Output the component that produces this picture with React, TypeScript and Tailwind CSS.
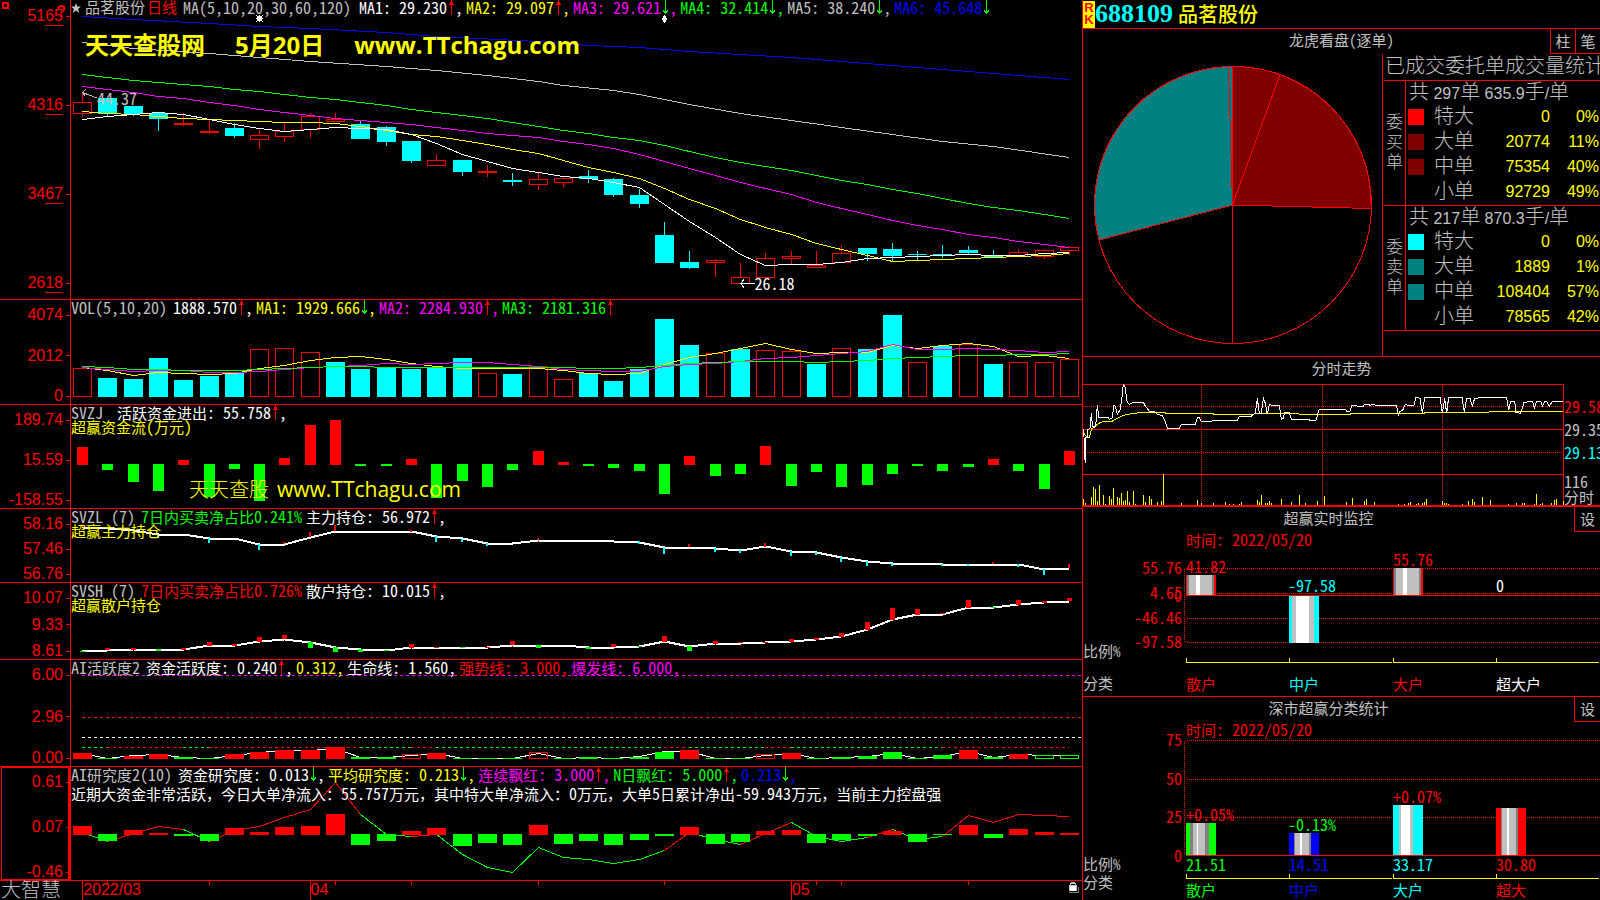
import React from 'react';

const STEP = 987 / 39;
const cx = (i: number) => Math.round(82 + i * STEP);

const RED = '#ff0000';
const CYAN = '#00ffff';
const GREEN = '#00ff00';
const YELLOW = '#ffff00';
const MAGENTA = '#ff00ff';
const BLUE = '#0000ff';
const SILVER = '#c0c0c0';
const GRAY = '#808080';
const WHITE = '#ffffff';

// kind, body top, body bottom, high, low (h = hollow red, r = flat red, c = cyan)
const candles: [string, number, number, number, number][] = [
    ['h', 102, 114, 93, 117], ['c', 98, 114, 98, 116], ['c', 106, 114, 106, 116], ['c', 113, 119, 112, 131],
    ['r', 123, 125, 113, 126], ['r', 131, 133, 119, 134], ['c', 128, 136, 123, 138], ['h', 135, 140, 130, 149],
    ['h', 131, 137, 122, 142], ['h', 116, 130, 113, 138], ['h', 119, 122, 113, 122], ['c', 124, 139, 121, 139],
    ['c', 127, 142, 126, 146], ['c', 141, 161, 141, 163], ['h', 160, 166, 154, 166], ['c', 160, 172, 160, 176],
    ['r', 171, 173, 165, 177], ['c', 180, 182, 173, 186], ['h', 179, 185, 173, 190], ['h', 178, 183, 177, 187],
    ['c', 176, 179, 170, 183], ['c', 179, 195, 178, 197], ['c', 195, 204, 189, 208], ['c', 235, 263, 222, 263],
    ['c', 262, 268, 251, 269], ['h', 260, 263, 259, 277], ['h', 277, 284, 263, 284], ['h', 258, 278, 253, 278],
    ['h', 256, 259, 251, 265], ['h', 265, 268, 251, 268], ['h', 253, 263, 245, 263], ['c', 248, 254, 248, 261],
    ['c', 249, 256, 243, 262], ['c', 254, 255, 251, 260], ['c', 254, 256, 245, 258], ['c', 250, 253, 246, 255],
    ['c', 256, 257, 250, 258], ['h', 252, 257, 249, 257], ['h', 250, 257, 249, 259], ['h', 247, 251, 246, 255],
];

const ma1 = [119, 116, 114, 112, 114, 119, 124, 128, 131, 129, 127, 128, 129, 134, 143, 154, 161, 168, 172, 176, 178, 182, 187, 204, 221, 237, 254, 265, 264, 264, 262, 258, 257, 256, 255, 254, 255, 255, 253, 252];
const ma2 = [111, 113, 114, 116, 118, 119, 120, 121, 122, 122, 123, 126, 130, 134, 136, 140, 144, 149, 153, 160, 167, 172, 178, 188, 199, 208, 219, 227, 234, 243, 249, 255, 261, 260, 259, 258, 257, 256, 255, 253];
const ma3 = [86, 89, 92, 96, 98, 102, 105, 109, 112, 115, 118, 120, 122, 124, 127, 130, 133, 135, 137, 141, 144, 148, 154, 161, 168, 175, 182, 188, 194, 202, 208, 214, 220, 225, 229, 234, 237, 241, 244, 247];
const ma4 = [74, 77, 80, 82, 84, 86, 89, 91, 94, 97, 99, 102, 105, 109, 112, 115, 118, 122, 126, 130, 133, 137, 140, 145, 151, 157, 162, 166, 170, 175, 180, 184, 189, 193, 198, 203, 207, 210, 214, 218];
const ma5: [number, number][] = [[0, 42], [2, 48], [5, 53], [7, 57], [9, 61], [12, 66], [14, 70], [16, 75], [18, 81], [19, 85], [21, 90], [22, 94], [24, 104], [26, 113], [28, 120], [30, 127], [32, 134], [34, 141], [36, 146], [39, 157]];
const ma6: [number, number][] = [[0, 16], [2, 19], [5, 23], [7, 26], [9, 28], [12, 32], [14, 36], [18, 41], [20, 45], [22, 47], [24, 51], [26, 54], [28, 57], [30, 61], [32, 65], [34, 69], [36, 73], [39, 79]];

const volume: [string, number][] = [
    ['h', 368], ['c', 378], ['c', 379], ['c', 358], ['c', 380], ['c', 376], ['c', 373], ['h', 349], ['h', 348], ['h', 352],
    ['c', 362], ['c', 369], ['c', 368], ['c', 369], ['c', 368], ['c', 358], ['h', 373], ['c', 374], ['h', 366], ['h', 379],
    ['c', 373], ['c', 381], ['c', 369], ['c', 319], ['c', 345], ['h', 353], ['c', 349], ['h', 350], ['h', 351], ['c', 364],
    ['h', 348], ['c', 349], ['c', 315], ['h', 362], ['c', 346], ['h', 344], ['c', 364], ['h', 362], ['h', 362], ['h', 359],
];
const volMa1 = [367, 370, 375, 372, 373, 374, 373, 368, 365, 360, 357, 356, 359, 363, 366, 368, 368, 368, 368, 370, 373, 374, 373, 364, 357, 353, 348, 343, 349, 353, 352, 352, 345, 348, 345, 343, 346, 356, 355, 358];
const volMa2 = [367, 369, 371, 370, 370, 372, 372, 371, 369, 367, 366, 365, 363, 364, 363, 362, 362, 364, 366, 369, 370, 371, 371, 366, 364, 363, 361, 358, 357, 355, 353, 351, 344, 349, 349, 348, 349, 350, 352, 351];
const volMa3 = [366, 367, 369, 369, 370, 370, 370, 369, 368, 367, 366, 366, 367, 367, 367, 367, 367, 367, 367, 367, 368, 368, 367, 365, 363, 362, 361, 361, 361, 362, 361, 360, 358, 357, 356, 355, 355, 354, 354, 353];

const flow = [447, 470, 482, 491, 460, 497, 469, 501, 458, 425, 420, 466, 466, 459, 498, 481, 487, 470, 451, 462, 466, 468, 471, 494, 456, 476, 474, 446, 486, 472, 487, 485, 474, 466, 471, 467, 459, 471, 489, 451];

const mainHold = [527, 528, 530, 534, 534, 538, 538, 544, 544, 537, 531, 531, 531, 531, 536, 538, 543, 543, 540, 540, 540, 541, 542, 547, 547, 548, 550, 546, 551, 552, 557, 561, 563, 563, 564, 564, 564, 564, 569, 568];
const mainTicks: [number, string, number, number][] = [
    [0, RED, 524, 527], [3, CYAN, 535, 538], [5, CYAN, 538, 543], [7, CYAN, 544, 550], [8, RED, 542, 544], [9, RED, 532, 537],
    [10, RED, 525, 531], [13, RED, 530, 532], [14, CYAN, 536, 542], [15, CYAN, 539, 542], [16, CYAN, 543, 546], [18, RED, 538, 540],
    [22, CYAN, 541, 544], [23, CYAN, 547, 554], [24, RED, 544, 547], [25, CYAN, 548, 552], [26, CYAN, 550, 553], [27, RED, 543, 547],
    [28, CYAN, 551, 556], [29, CYAN, 552, 555], [30, CYAN, 557, 562], [31, CYAN, 561, 566], [32, CYAN, 563, 566], [34, CYAN, 564, 566],
    [35, CYAN, 564, 566], [36, RED, 562, 564], [37, CYAN, 564, 567], [38, CYAN, 569, 575], [39, RED, 564, 568],
];

const retailHold = [651, 650, 649, 649, 649, 645, 645, 641, 639, 642, 647, 649, 650, 647, 647, 647, 647, 645, 645, 645, 647, 647, 646, 641, 646, 643, 643, 642, 641, 639, 636, 629, 619, 614, 614, 607, 607, 604, 602, 601];
const retailTicks: [number, string, number, number][] = [
    [0, GREEN, 651, 652], [1, RED, 648, 650], [2, RED, 648, 650], [3, GREEN, 649, 651], [4, RED, 648, 650], [5, RED, 642, 646],
    [6, RED, 644, 646], [7, RED, 637, 642], [8, RED, 635, 639], [9, GREEN, 642, 648], [10, GREEN, 647, 652], [11, GREEN, 649, 652],
    [12, GREEN, 650, 651], [13, RED, 644, 648], [14, RED, 647, 648], [15, GREEN, 647, 648], [16, RED, 647, 648], [17, RED, 641, 645],
    [18, GREEN, 645, 648], [20, GREEN, 647, 649], [21, RED, 644, 647], [22, GREEN, 646, 647], [23, RED, 636, 642], [24, GREEN, 646, 651],
    [25, RED, 641, 644], [26, RED, 642, 643], [27, RED, 642, 643], [28, RED, 639, 642], [29, RED, 638, 640], [30, RED, 633, 637],
    [31, RED, 622, 630], [32, RED, 608, 620], [33, RED, 609, 615], [34, RED, 613, 614], [35, RED, 600, 608], [36, GREEN, 607, 608],
    [37, RED, 600, 605], [38, RED, 601, 603], [39, RED, 598, 601],
];

// r / g = solid, R / G = outlined
const activeKinds = 'rgrrggrrrrrggRrgggRgggggrggRrggggggrgrGG';
const activeTop = [753, 758, 756, 754, 757, 758, 754, 752, 750, 750, 747, 757, 757, 754, 753, 758, 758, 758, 752, 758, 757, 758, 757, 752, 750, 758, 758, 754, 753, 758, 757, 756, 752, 758, 755, 750, 757, 754, 755, 755];
const activeLine = [753, 758, 755, 754, 757, 758, 755, 752, 750, 750, 748, 757, 757, 755, 753, 758, 758, 758, 753, 758, 757, 758, 756, 751, 751, 758, 758, 755, 753, 758, 757, 756, 753, 758, 756, 751, 757, 754, 755, 755];
const trendSegments: [number, number, string][] = [
    [0, 1, GREEN], [1, 4, RED], [4, 5, GREEN], [5, 11, RED], [11, 13, GREEN], [13, 14, RED], [14, 23, GREEN],
    [23, 24, RED], [24, 27, GREEN], [27, 28, RED], [28, 34, GREEN], [34, 39, RED],
];

const research = [826, 841, 830, 833, 836, 841, 828, 832, 827, 826, 814, 845, 841, 831, 828, 846, 843, 845, 825, 844, 841, 845, 840, 836, 827, 844, 842, 831, 830, 843, 840, 836, 831, 842, 835, 825, 838, 829, 832, 833];
const researchLine = [832, 841, 833, 826, 829, 841, 830, 826, 817, 809, 782, 814, 834, 836, 834, 854, 867, 872, 847, 857, 859, 863, 859, 850, 832, 839, 844, 833, 822, 836, 841, 837, 829, 839, 836, 815, 822, 814, 815, 816];
const researchSegments: [number, number, string][] = [
    [0, 1, GREEN], [1, 4, RED], [4, 5, GREEN], [5, 11, RED], [11, 13, GREEN], [13, 14, RED], [14, 23, GREEN],
    [23, 24, RED], [24, 26, GREEN], [26, 28, RED], [28, 31, GREEN], [31, 32, RED], [32, 34, GREEN], [34, 39, RED],
];

const priceLine = '9,238 12,262 13,310 16,338 18,262 22,262 24,238 30,235 34,190 37,225 40,232 47,230 52,166 56,201 84,201 88,208 96,205 102,166 106,168 112,192 120,180 125,150 130,103 135,112 142,158 148,163 160,157 190,157 196,168 208,184 222,184 232,193 246,196 256,214 262,235 298,235 304,223 346,223 352,203 358,203 364,214 396,214 398,211 472,211 478,199 514,199 520,193 526,190 532,145 538,190 544,190 550,145 556,160 562,193 568,163 574,166 598,166 604,208 610,205 614,187 628,187 634,208 686,208 690,211 708,211 714,190 718,178 796,178 800,184 810,184 816,166 828,166 832,169 850,169 853,163 866,163 870,166 880,163 886,166 950,166 955,199 960,184 968,181 974,166 978,163 984,166 1002,166 1008,142 1020,145 1027,190 1034,142 1080,142 1087,190 1094,145 1100,190 1106,142 1146,142 1153,187 1160,145 1170,145 1177,168 1184,145 1214,142 1280,142 1286,181 1292,154 1304,154 1308,187 1322,190 1332,157 1358,154 1363,175 1370,154 1382,154 1387,168 1394,154 1400,154 1408,168 1418,154 1448,154';
const averageLine = '9,238 12,250 20,262 28,262 34,238 45,228 60,218 70,214 96,214 110,206 130,196 160,190 190,187 250,187 260,190 400,190 402,193 520,193 530,190 655,190 658,193 810,193 815,190 1032,190 1036,187 1225,187 1230,184 1448,184';
const minuteVolume: [number, number][] = [
    [10, 447], [16, 459], [34, 441], [40, 411], [46, 417], [52, 453], [58, 405], [70, 435], [76, 462], [88, 438], [94, 447],
    [100, 414], [112, 441], [118, 444], [124, 429], [130, 453], [136, 450], [142, 423], [148, 456], [160, 423], [166, 462],
    [190, 435], [196, 456], [208, 438], [214, 447], [232, 456], [244, 453], [250, 373], [304, 459], [352, 450], [364, 459],
    [400, 459], [436, 456], [448, 462], [460, 462], [478, 462], [484, 456], [532, 450], [538, 456], [544, 435], [556, 459],
    [562, 459], [568, 453], [574, 459], [604, 447], [634, 456], [658, 435], [676, 459], [712, 453], [733, 438], [799, 456],
    [817, 444], [853, 453], [859, 447], [883, 456], [955, 462], [973, 462], [985, 459], [991, 456], [1009, 462], [1015, 459],
    [1027, 459], [1033, 456], [1039, 447], [1087, 453], [1093, 459], [1099, 459], [1105, 462], [1147, 462], [1165, 453],
    [1177, 447], [1183, 456], [1207, 441], [1231, 450], [1285, 462], [1309, 459], [1327, 459], [1333, 459], [1363, 462],
    [1369, 432], [1381, 462], [1387, 459], [1415, 459], [1423, 450], [1429, 447], [1450, 453],
];

const series = (ys: number[], from = 0, to = ys.length - 1) =>
    ys.slice(from, to + 1).map((y, k) => `${cx(from + k) + 0.5},${y + 0.5}`).join(' ');
const sparse = (pts: [number, number][]) => pts.map(([i, y]) => `${cx(i) + 0.5},${y + 0.5}`).join(' ');

// Chinese runs are set one pixel smaller than the half-width Latin around them
const Mixed = ({ text }: { text: string }) => (
    <>
        {text.split(/([\u4e00-\u9fff\uff00-\uffef]+)/).map((part, i) =>
            i % 2 ? <span key={i} className="text-[15px] [font-feature-settings:normal]">{part}</span> : part
        )}
    </>
);

const Arrow = ({ up }: { up: boolean }) => (
    <svg viewBox="0 0 8 15" className="h-[15px] w-2 shrink-0" shapeRendering="crispEdges">
        {up ? (
            <path d="M4 0h1v15h-1z M3 2h3v1h-3z M2 4h2v1h-2z M5 4h2v1h-2z M3 3h3v1h-3z" fill={RED} />
        ) : (
            <path d="M4 0h1v14h-1z M3 12h3v1h-3z M2 10h1v2h-1z M6 10h1v2h-1z M3 11h3v1h-3z" fill={GREEN} />
        )}
    </svg>
);

interface ReadingProps {
    text: string;
    color: string;
    dir?: 'up' | 'down';
    end?: string;
}

const Reading = ({ text, color, dir, end = ',' }: ReadingProps) => (
    <span className={`mr-[3px] flex ${color}`}>
        <span><Mixed text={text} /></span>
        {dir && <Arrow up={dir === 'up'} />}
        <span>{end}</span>
    </span>
);

interface PanelProps {
    labels: string[];
    top: number;
    height: number;
    chart: React.ReactNode;
    children: React.ReactNode;
    underline?: boolean;
    active?: boolean;
    corner?: React.ReactNode;
}

const Panel = ({ labels, top, height, chart, children, underline, active, corner }: PanelProps) => (
    <section className="flex min-h-0 border-b border-[#ff0000]">
        <div className={`relative flex w-[71px] shrink-0 flex-col justify-between border-r border-[#ff0000] font-['Liberation_Sans',sans-serif] text-base leading-4 text-[#ff0000] ${underline ? 'py-2' : 'pt-[7px]'}`}>
            {active && <div className="absolute inset-y-0 right-0 left-px border border-r-2 border-[#ff0000]" />}
            {corner}
            {labels.map((label) => (
                <div key={label} className="relative flex items-center justify-end gap-[3px]">
                    <span>{underline ? <>{label.slice(0, 2)}<span className="underline decoration-1 underline-offset-4">{label.slice(2)}</span></> : label}</span>
                    <span className="h-px w-1 bg-[#ff0000]" />
                </div>
            ))}
        </div>
        <div className="relative min-w-0 flex-1">
            <svg
                viewBox={`71 ${top} 1011 ${height}`}
                preserveAspectRatio="none"
                shapeRendering="crispEdges"
                className="absolute inset-0 h-full w-full"
                fill="none"
            >
                {chart}
            </svg>
            <div className="relative whitespace-pre leading-[14px]">{children}</div>
        </div>
    </section>
);

const KLineChart = () => (
    <>
        {candles.map(([kind, top, bottom, high, low], i) => {
            const color = kind === 'c' ? CYAN : RED;
            return (
                <g key={i}>
                    {high < top && <rect x={cx(i)} y={high} width="1" height={top - high} fill={color} />}
                    {low > bottom && <rect x={cx(i)} y={bottom} width="1" height={low - bottom} fill={color} />}
                    {kind === 'h' ? (
                        <rect x={cx(i) - 8.5} y={top + 0.5} width="18" height={bottom - top - 1} stroke={RED} />
                    ) : (
                        <rect x={cx(i) - 9} y={top} width="19" height={bottom - top} fill={color} />
                    )}
                </g>
            );
        })}
        <polyline points={sparse(ma6)} stroke={BLUE} />
        <polyline points={sparse(ma5)} stroke={SILVER} />
        <polyline points={series(ma4)} stroke={GREEN} />
        <polyline points={series(ma3)} stroke={MAGENTA} />
        <polyline points={series(ma2)} stroke={YELLOW} />
        <polyline points={series(ma1)} stroke={WHITE} />
        <path d="M82.5 92.5L97 98M85.5 89.5L82.5 92.5L85.5 96.5" stroke={SILVER} />
        <path d="M740 283.5H755M744 279.5L740.5 283.5L744 287.5" stroke={WHITE} />
        <path d="M257 16h5v5h-5zM256 15h1v1h-1zM262 15h1v1h-1zM256 21h1v1h-1zM262 21h1v1h-1zM259 15h1v7h-1zM256 18h7v1h-7z" fill={WHITE} />
        <path d="M664 15h1v1h1v2h1v2h-1v2h-1v1h-1v-1h-1v-2h-1v-2h1v-2h1z" fill={WHITE} />
    </>
);

const VolumeChart = () => (
    <>
        {volume.map(([kind, top], i) =>
            kind === 'h' ? (
                <rect key={i} x={cx(i) - 8.5} y={top + 0.5} width="18" height={396 - top} stroke={RED} />
            ) : (
                <rect key={i} x={cx(i) - 9} y={top} width="19" height={397 - top} fill={CYAN} />
            )
        )}
        <polyline points={series(volMa1)} stroke={YELLOW} />
        <polyline points={series(volMa2)} stroke={MAGENTA} />
        <polyline points={series(volMa3)} stroke={GREEN} />
    </>
);

const FlowChart = () => (
    <>
        {flow.map((y, i) =>
            y < 465 ? (
                <rect key={i} x={cx(i) - 5} y={y} width="11" height={465 - y} fill={RED} />
            ) : (
                <rect key={i} x={cx(i) - 5} y="464" width="11" height={y - 464} fill={GREEN} />
            )
        )}
    </>
);

const HoldChart = ({ line, ticks, width }: { line: number[]; ticks: [number, string, number, number][]; width: number }) => (
    <>
        <polyline points={series(line)} stroke={WHITE} strokeWidth="2" />
        {ticks.map(([i, color, y1, y2]) => (
            <rect key={i} x={cx(i) - Math.floor(width / 2)} y={y1} width={width} height={y2 - y1} fill={color} />
        ))}
    </>
);

const ActiveChart = () => (
    <>
        <path d="M82 675.5H1082" stroke={MAGENTA} strokeDasharray="3 3" />
        <path d="M82 717.5H1082" stroke={RED} strokeDasharray="3 3" />
        <path d="M82 737.5H1082" stroke={WHITE} strokeDasharray="3 3" />
        {trendSegments.map(([a, b, color]) => (
            <path key={a} d={`M${cx(a)} 747.5H${cx(b)}`} stroke={color} strokeDasharray="3 3" />
        ))}
        <polyline points={series(activeLine)} stroke={WHITE} />
        {activeTop.map((top, i) => {
            const kind = activeKinds[i];
            const color = kind.toLowerCase() === 'r' ? RED : GREEN;
            return kind === 'R' || kind === 'G' ? (
                <rect key={i} x={cx(i) - 8.5} y={top + 0.5} width="18" height={758 - top} stroke={color} />
            ) : (
                <rect key={i} x={cx(i) - 9} y={top} width="19" height={759 - top} fill={color} />
            );
        })}
    </>
);

const ResearchChart = () => (
    <>
        {researchSegments.map(([a, b, color]) => (
            <polyline key={a} points={series(researchLine, a, b)} stroke={color} />
        ))}
        {research.map((y, i) =>
            y < 834 ? (
                <rect key={i} x={cx(i) - 9} y={y} width="19" height={835 - y} fill={RED} />
            ) : (
                <rect key={i} x={cx(i) - 9} y="834" width="19" height={Math.max(1, y - 834)} fill={GREEN} />
            )
        )}
    </>
);

const TimeAxis = () => (
    <footer className="flex min-h-0">
        <div className="w-[71px] shrink-0 pl-px text-xl leading-4 font-light text-[#c0c0c0]">大智慧</div>
        <div className="relative flex-1 font-['Liberation_Sans',sans-serif] text-base leading-[18px] text-[#ff0000]">
            <svg viewBox="71 881 1011 19" preserveAspectRatio="none" className="absolute inset-0 h-full w-full" shapeRendering="crispEdges">
                {[82, 310, 791].map((x) => <rect key={x} x={x} y="881" width="1" height="19" fill={RED} />)}
                {[107, 209, 335, 411, 538, 664, 816, 841, 968].map((x) => <rect key={x} x={x} y="881" width="1" height="4" fill={RED} />)}
                <path d="M1071 882h4v1h1v2h-1v-1h-4v1h-1v-2h1z" fill={SILVER} />
                <path d="M1069 885h8v1h-8zM1069 886h1v5h-1zM1076 886h1v5h-1z" fill={SILVER} />
                <path d="M1070 886h6v5h-6z" fill={WHITE} />
                <path d="M1078 887h1v6h-10v-1h9z" fill={GRAY} />
            </svg>
            <span className="absolute left-[1.2%]">2022/03</span>
            <span className="absolute left-[23.7%]">04</span>
            <span className="absolute left-[71.3%]">05</span>
        </div>
    </footer>
);

const pieX = 149.5;
const pieY = 151;

const PieChart = () => (
    <svg viewBox="0 0 299 302" className="w-[299px] shrink-0" shapeRendering="crispEdges" fill="none" stroke={RED}>
        <path d={`M${pieX} ${pieY}V12.5A138.5 138.5 0 0 1 197 20.5Z`} fill="#800000" />
        <path d={`M${pieX} ${pieY}L197 20.5A138.5 138.5 0 0 1 288 154.5Z`} fill="#800000" />
        <path d={`M${pieX} ${pieY}L16 186A138.5 138.5 0 0 1 145.5 12.5Z`} fill="#008080" />
        <path d={`M${pieX} ${pieY}L145.5 12.5H${pieX}Z`} fill="#008080" />
        <circle cx="150" cy={pieY} r="138.5" />
        <path d={`M${pieX} ${pieY}V289`} />
    </svg>
);

interface OrderGroup {
    side: string;
    count: string;
    average: string;
    rows: [string, string, string, string][];
}

const orders: OrderGroup[] = [
    {
        side: '委买单',
        count: '297',
        average: '635.9',
        rows: [
            ['bg-[#ff0000]', '特大', '0', '0%'],
            ['bg-[#800000]', '大单', '20774', '11%'],
            ['bg-[#800000]', '中单', '75354', '40%'],
            ['bg-black', '小单', '92729', '49%'],
        ],
    },
    {
        side: '委卖单',
        count: '217',
        average: '870.3',
        rows: [
            ['bg-[#00ffff]', '特大', '0', '0%'],
            ['bg-[#008080]', '大单', '1889', '1%'],
            ['bg-[#008080]', '中单', '108404', '57%'],
            ['bg-black', '小单', '78565', '42%'],
        ],
    },
];

const OrderStats = () => (
    <div className="min-w-0 flex-1 overflow-hidden border-l border-[#ff0000] pl-px font-['Liberation_Sans','Noto_Sans_CJK_SC',sans-serif] font-light">
        <h3 className="h-[26px] whitespace-nowrap pl-px text-xl leading-6 text-[#c0c0c0]">已成交委托单成交量统计</h3>
        {orders.map(({ side, count, average, rows }) => (
            <div key={side} className="flex h-[125px] border-t border-[#ff0000]">
                <div className="flex w-[22px] shrink-0 flex-col items-center justify-center border-r border-[#ff0000] text-[17px] leading-5 text-[#c0c0c0]">
                    {side.split('').map((c) => <span key={c}>{c}</span>)}
                </div>
                <div className="min-w-0 flex-1">
                    <div className="h-[23px] whitespace-nowrap pl-[3px] text-base leading-[22px] font-normal text-[#c0c0c0]">
                        <span className="text-xl leading-[22px] font-light">共</span> {count}<span className="text-xl leading-[22px] font-light">单</span> {average}<span className="text-xl leading-[22px] font-light">手</span>/<span className="text-xl leading-[22px] font-light">单</span>
                    </div>
                    <table className="w-full table-fixed text-base text-[#ffff00]">
                        <tbody>
                            {rows.map(([swatch, name, amount, share]) => (
                                <tr key={name} className="h-[25px]">
                                    <td className="w-7 p-0 pl-0.5"><div className={`size-4 ${swatch}`} /></td>
                                    <th className="w-12 p-0 text-left text-xl leading-[25px] font-light text-[#c0c0c0]">{name}</th>
                                    <td className="p-0 text-right font-normal">{amount}</td>
                                    <td className="w-[50px] p-0 pr-px text-right font-normal">{share}</td>
                                </tr>
                            ))}
                        </tbody>
                    </table>
                </div>
            </div>
        ))}
        <div className="border-t border-[#ff0000]" />
    </div>
);

const Intraday = () => (
    <section className="border-b-2 border-[#ff0000]">
        <h2 className="h-[27px] text-center text-[15px] leading-[22px] text-[#c0c0c0]">分时走势</h2>
        <div className="flex">
            <svg viewBox="9 102 1443 363" className="h-[121px] w-[481px] shrink-0" shapeRendering="crispEdges" fill="none">
                <g stroke={RED} strokeWidth="3">
                    <path d="M9 103.5H1452M9 238.5H1452M9 373.5H1452M1450.5 102V465" />
                    <path d="M9 169.5H1450M9 307.5H1450M364.5 105V465M727.5 105V465M1087.5 105V465" strokeDasharray="3 3" />
                </g>
                {minuteVolume.map(([x, y]) => (
                    <path key={x} d={`M${x + 0.5} ${y}V465`} stroke={YELLOW} strokeWidth="3" />
                ))}
                <polyline points={averageLine} stroke={YELLOW} strokeWidth="3" />
                <polyline points={priceLine} stroke={WHITE} strokeWidth="3" />
            </svg>
            <div className="flex min-w-0 flex-1 flex-col overflow-hidden pt-[11px] text-base leading-[23px] text-[#c0c0c0]">
                <span className="text-[#ff0000]">29.58</span>
                <span>29.35</span>
                <span className="text-[#00ffff]">29.13</span>
                <span className="mt-2.5 leading-[15px]">116</span>
                <span className="text-[15px] leading-[15px]">分时</span>
            </div>
        </div>
    </section>
);

type Stripe = [string, number];
interface Bar {
    x: number;
    y: number;
    h: number;
    stripes: Stripe[];
}

const Bars = ({ bars }: { bars: Bar[] }) => (
    <>
        {bars.map(({ x, y, h, stripes }) => {
            let left = x;
            return stripes.map(([color, w], i) => {
                const at = left;
                left += w;
                return <rect key={`${x}-${i}`} x={at} y={y} width={w} height={h} fill={color} />;
            });
        })}
    </>
);

const redBar: Stripe[] = [[RED, 1], [GRAY, 2], [SILVER, 7], [WHITE, 4], [SILVER, 12], [GRAY, 2], [RED, 2]];
const monitorBars: Bar[] = [
    { x: 1186, y: 575, h: 20, stripes: redBar },
    { x: 1289, y: 596, h: 47, stripes: [[CYAN, 3], [SILVER, 4], [WHITE, 13], [SILVER, 5], [CYAN, 5]] },
    { x: 1393, y: 568, h: 27, stripes: redBar },
];
const classBars: Bar[] = [
    { x: 1186, y: 823, h: 32, stripes: [[GREEN, 4], [GRAY, 3], [SILVER, 4], [WHITE, 1], [SILVER, 7], [GRAY, 4], [GREEN, 7]] },
    { x: 1289, y: 833, h: 22, stripes: [[BLUE, 5], [GRAY, 1], [SILVER, 5], [WHITE, 2], [SILVER, 7], [GRAY, 2], [BLUE, 8]] },
    { x: 1393, y: 805, h: 50, stripes: [[CYAN, 6], [SILVER, 2], [WHITE, 9], [SILVER, 3], [CYAN, 10]] },
    { x: 1496, y: 808, h: 47, stripes: [[RED, 5], [GRAY, 1], [SILVER, 5], [WHITE, 2], [SILVER, 7], [GRAY, 2], [RED, 8]] },
];

// text, x, centre y, colour, anchor
type Label = [string, number, number, string, ('end' | 'start')?];

const Labels = ({ items }: { items: Label[] }) => (
    <>
        {items.map(([text, x, y, color, anchor = 'start']) => (
            <text key={`${text}${x}${y}`} x={x} y={y + 5} fill={color} textAnchor={anchor} className={/[\u4e00-\u9fff]/.test(text) ? 'text-[15px]' : 'text-base'}>
                {text}
            </text>
        ))}
    </>
);

const monitorLabels: Label[] = [
    ['55.76', 1182, 569, RED, 'end'], ['4.65', 1182, 594, RED, 'end'], ['0', 1182, 597, RED, 'end'],
    ['-46.46', 1182, 619, RED, 'end'], ['-97.58', 1182, 643, RED, 'end'],
    ['41.82', 1186, 568, RED], ['-97.58', 1288, 587, CYAN], ['55.76', 1393, 561, RED], ['0', 1496, 587, WHITE],
    ['比例%', 1083, 652, SILVER], ['分类', 1083, 684, SILVER],
    ['散户', 1186, 685, RED], ['中户', 1289, 685, CYAN], ['大户', 1393, 685, RED], ['超大户', 1496, 685, WHITE],
];
const classLabels: Label[] = [
    ['75', 1182, 741, RED, 'end'], ['50', 1182, 780, RED, 'end'], ['25', 1182, 818, RED, 'end'], ['0', 1182, 857, RED, 'end'],
    ['+0.05%', 1186, 816, RED], ['-0.13%', 1288, 826, GREEN], ['+0.07%', 1393, 798, RED],
    ['21.51', 1186, 866, GREEN], ['14.51', 1289, 866, BLUE], ['33.17', 1393, 866, CYAN], ['30.80', 1496, 866, RED],
    ['比例%', 1083, 865, SILVER], ['分类', 1083, 883, SILVER],
    ['散户', 1186, 891, GREEN], ['中户', 1289, 891, BLUE], ['大户', 1393, 891, CYAN], ['超大', 1496, 891, RED],
];

const SettingTitle = ({ title }: { title: string }) => (
    <div className="flex h-[25px] text-[15px] leading-[22px] text-[#c0c0c0]">
        <h2 className="flex-1 text-center">{title}</h2>
        <button className="h-[25px] w-[26px] border-b border-l border-[#ff0000]">设</button>
    </div>
);

const Category = ({ y }: { y: number }) => (
    <path
        d={`M1186.5 ${y - 4}V${y + 0.5}H1392M1289.5 ${y - 4}V${y}M1393.5 ${y - 4}V${y + 0.5}H1599M1496.5 ${y - 4}V${y}`}
        stroke={YELLOW}
        fill="none"
    />
);

const Sidebar = () => (
    <aside className="w-[518px] shrink-0 overflow-hidden border-l border-[#ff0000]">
        <header className="flex h-[29px] items-center border-b border-[#ff0000]">
            <div className="flex h-[27px] w-3 flex-col items-center justify-center bg-[#ffff00] font-['Liberation_Sans',sans-serif] text-[13px] leading-3 font-bold text-[#ff0000]">
                <span>R</span>
                <span>K</span>
            </div>
            <h1 className="flex items-center gap-[5px] leading-7">
                <span className="font-['Liberation_Serif',serif] text-[26px] font-bold text-[#00ffff]">688109</span>
                <span className="text-xl font-medium text-[#ffff00]">品茗股份</span>
            </h1>
        </header>
        <section className="border-b border-[#ff0000]">
            <div className="flex h-[25px] text-[15px] leading-[22px] text-[#c0c0c0]">
                <h2 className="flex-1 pl-[50px] text-center">龙虎看盘(逐单)</h2>
                <button className="h-[25px] w-[25px] border-b border-l border-[#ff0000]">柱</button>
                <button className="h-[25px] w-[25px] border-b border-l border-[#ff0000]">笔</button>
            </div>
            <div className="flex h-[302px]">
                <PieChart />
                <OrderStats />
            </div>
        </section>
        <Intraday />
        <section className="border-b border-[#ff0000]">
            <SettingTitle title="超赢实时监控" />
            <p className="h-4 pl-[103px] text-base leading-[14px] text-[#ff0000]"><Mixed text="时间: 2022/05/20" /></p>
            <svg viewBox="1083 548 517 148" className="block w-full">
                <g shapeRendering="crispEdges">
                    <path d="M1187 568.5H1600M1187 593.5H1600M1187 618.5H1600M1187 642.5H1600M1184.5 569V643" stroke={RED} strokeDasharray="1 1" />
                    <path d="M1186 595.5H1600" stroke={RED} />
                    <Bars bars={monitorBars} />
                    <Category y={662} />
                </g>
                <Labels items={monitorLabels} />
            </svg>
        </section>
        <section>
            <SettingTitle title="深市超赢分类统计" />
            <p className="h-4 pl-[103px] text-base leading-[14px] text-[#ff0000]"><Mixed text="时间: 2022/05/20" /></p>
            <svg viewBox="1083 738 517 162" className="block w-full overflow-visible">
                <g shapeRendering="crispEdges">
                    <path d="M1187 740.5H1600M1187 779.5H1600M1187 817.5H1600M1184.5 741V855" stroke={RED} strokeDasharray="1 1" />
                    <path d="M1186 855.5H1600" stroke={RED} />
                    <Bars bars={classBars} />
                    <Category y={878} />
                </g>
                <Labels items={classLabels} />
            </svg>
        </section>
    </aside>
);

export default function App() {
    return (
        <div className="flex h-screen overflow-hidden bg-black font-['Noto_Sans_CJK_SC',sans-serif] text-base font-normal text-white [font-feature-settings:'hwid']">
            <main className="grid min-w-0 flex-1 grid-rows-[300fr_105fr_104fr_74fr_77fr_107fr_114fr_19fr]">
                <Panel
                    labels={['5165', '4316', '3467', '2618']}
                    top={0}
                    height={299}
                    underline
                    chart={<KLineChart />}
                    corner={
                        <>
                            <svg viewBox="0 0 8 8" className="absolute top-0.5 left-0.5 size-2" shapeRendering="crispEdges">
                                <path d="M0 0h7v7h-7zM2 2v3h3v-3zM7 7h1v1h-1z" fill={RED} fillRule="evenodd" />
                            </svg>
                            <span className="absolute top-0 right-1 text-base font-bold">?</span>
                        </>
                    }
                >
                    <div className="flex">
                        <span className="flex w-[14px] items-center">
                            <svg viewBox="0 0 10 10" className="size-[10px]" fill={SILVER}>
                                <path d="M5 0L6.3 3.6H10L7.1 6L8.2 10L5 7.6L1.8 10L2.9 6L0 3.6H3.7Z" />
                            </svg>
                        </span>
                        <span className="text-[15px] text-[#c0c0c0]">品茗股份</span>
                        <span className="mr-1.5 ml-0.5 text-[15px] text-[#ff0000]">日线</span>
                        <span className="mr-2 text-[#c0c0c0]">MA(5,10,20,30,60,120)</span>
                        <Reading text="MA1: 29.230" color="text-white" dir="up" />
                        <Reading text="MA2: 29.097" color="text-[#ffff00]" dir="up" />
                        <Reading text="MA3: 29.621" color="text-[#ff00ff]" dir="down" />
                        <Reading text="MA4: 32.414" color="text-[#00ff00]" dir="down" />
                        <Reading text="MA5: 38.240" color="text-[#c0c0c0]" dir="down" />
                        <Reading text="MA6: 45.648" color="text-[#0000ff]" dir="down" end="" />
                    </div>
                    <div className="flex gap-[30px] pt-[18px] pl-[14px] font-['Open_Sans','Noto_Sans_CJK_SC',sans-serif] text-2xl leading-6 font-bold text-[#ffff00] [font-feature-settings:normal]">
                        <span>天天查股网</span>
                        <span>5月20日</span>
                        <span>www.TTchagu.com</span>
                    </div>
                    <span className="absolute top-[91px] left-[26px] text-[#c0c0c0]">44.37</span>
                    <span className="absolute top-[276px] left-[67.6%]">26.18</span>
                </Panel>
                <Panel labels={['4074', '2012', '0']} top={300} height={104} chart={<VolumeChart />}>
                    <div className="flex">
                        <span className="mr-[6px] text-[#c0c0c0]">VOL(5,10,20)</span>
                        <Reading text="1888.570" color="text-white" dir="up" />
                        <Reading text="MA1: 1929.666" color="text-[#ffff00]" dir="down" />
                        <Reading text="MA2: 2284.930" color="text-[#ff00ff]" dir="up" />
                        <Reading text="MA3: 2181.316" color="text-[#00ff00]" dir="up" end="" />
                    </div>
                </Panel>
                <Panel labels={['189.74', '15.59', '-158.55']} top={405} height={103} chart={<FlowChart />}>
                    <div className="flex h-[14px]">
                        <span className="mr-[14px] text-[#c0c0c0]">SVZJ</span>
                        <Reading text="活跃资金进出: 55.758" color="text-white" dir="up" />
                    </div>
                    <div className="text-[#ffff00]"><Mixed text="超赢资金流(万元)" /></div>
                    <div className="flex gap-2 pt-[43px] pl-[118px] text-xl leading-6 text-[#ffff00]">
                        <span className="font-light">天天查股</span>
                        <span className="font-['Open_Sans','Noto_Sans',sans-serif] text-[21px]">www.TTchagu.com</span>
                    </div>
                </Panel>
                <Panel labels={['58.16', '57.46', '56.76']} top={509} height={73} chart={<HoldChart line={mainHold} ticks={mainTicks} width={2} />}>
                    <div className="flex h-[14px]">
                        <span className="mr-[6px] text-[#c0c0c0]">SVZL (7)</span>
                        <span className="mr-1 text-[#00ff00]"><Mixed text="7日内买卖净占比0.241%" /></span>
                        <Reading text="主力持仓: 56.972" color="text-white" dir="up" />
                    </div>
                    <div className="text-[#ffff00]"><Mixed text="超赢主力持仓" /></div>
                </Panel>
                <Panel labels={['10.07', '9.33', '8.61']} top={583} height={76} chart={<HoldChart line={retailHold} ticks={retailTicks} width={5} />}>
                    <div className="flex h-[14px]">
                        <span className="mr-[6px] text-[#c0c0c0]">SVSH (7)</span>
                        <span className="mr-1 text-[#ff0000]"><Mixed text="7日内买卖净占比0.726%" /></span>
                        <Reading text="散户持仓: 10.015" color="text-white" dir="up" />
                    </div>
                    <div className="text-[#ffff00]"><Mixed text="超赢散户持仓" /></div>
                </Panel>
                <Panel labels={['6.00', '2.96', '0.00']} top={660} height={106} chart={<ActiveChart />}>
                    <div className="flex">
                        <span className="mr-[6px] text-[#c0c0c0]"><Mixed text="AI活跃度2" /></span>
                        <Reading text="资金活跃度: 0.240" color="text-white" dir="up" />
                        <Reading text="0.312" color="text-[#ffff00]" />
                        <Reading text="生命线: 1.560" color="text-white" />
                        <Reading text="强势线: 3.000" color="text-[#ff0000]" />
                        <Reading text="爆发线: 6.000" color="text-[#ff00ff]" />
                    </div>
                </Panel>
                <Panel labels={['0.61', '0.07', '-0.46']} top={767} height={113} active chart={<ResearchChart />}>
                    <div className="flex">
                        <span className="mr-[6px] text-[#c0c0c0]"><Mixed text="AI研究度2(10)" /></span>
                        <Reading text="资金研究度: 0.013" color="text-white" dir="down" />
                        <Reading text="平均研究度: 0.213" color="text-[#ffff00]" dir="down" />
                        <Reading text="连续飘红: 3.000" color="text-[#ff00ff]" dir="up" />
                        <Reading text="N日飘红: 5.000" color="text-[#00ff00]" dir="up" />
                        <Reading text="0.213" color="text-[#0000ff]" dir="down" />
                    </div>
                    <p className="pt-1"><Mixed text="近期大资金非常活跃，今日大单净流入：55.757万元，其中特大单净流入：0万元，大单5日累计净出-59.943万元，当前主力控盘强" /></p>
                </Panel>
                <TimeAxis />
            </main>
            <Sidebar />
        </div>
    );
}
